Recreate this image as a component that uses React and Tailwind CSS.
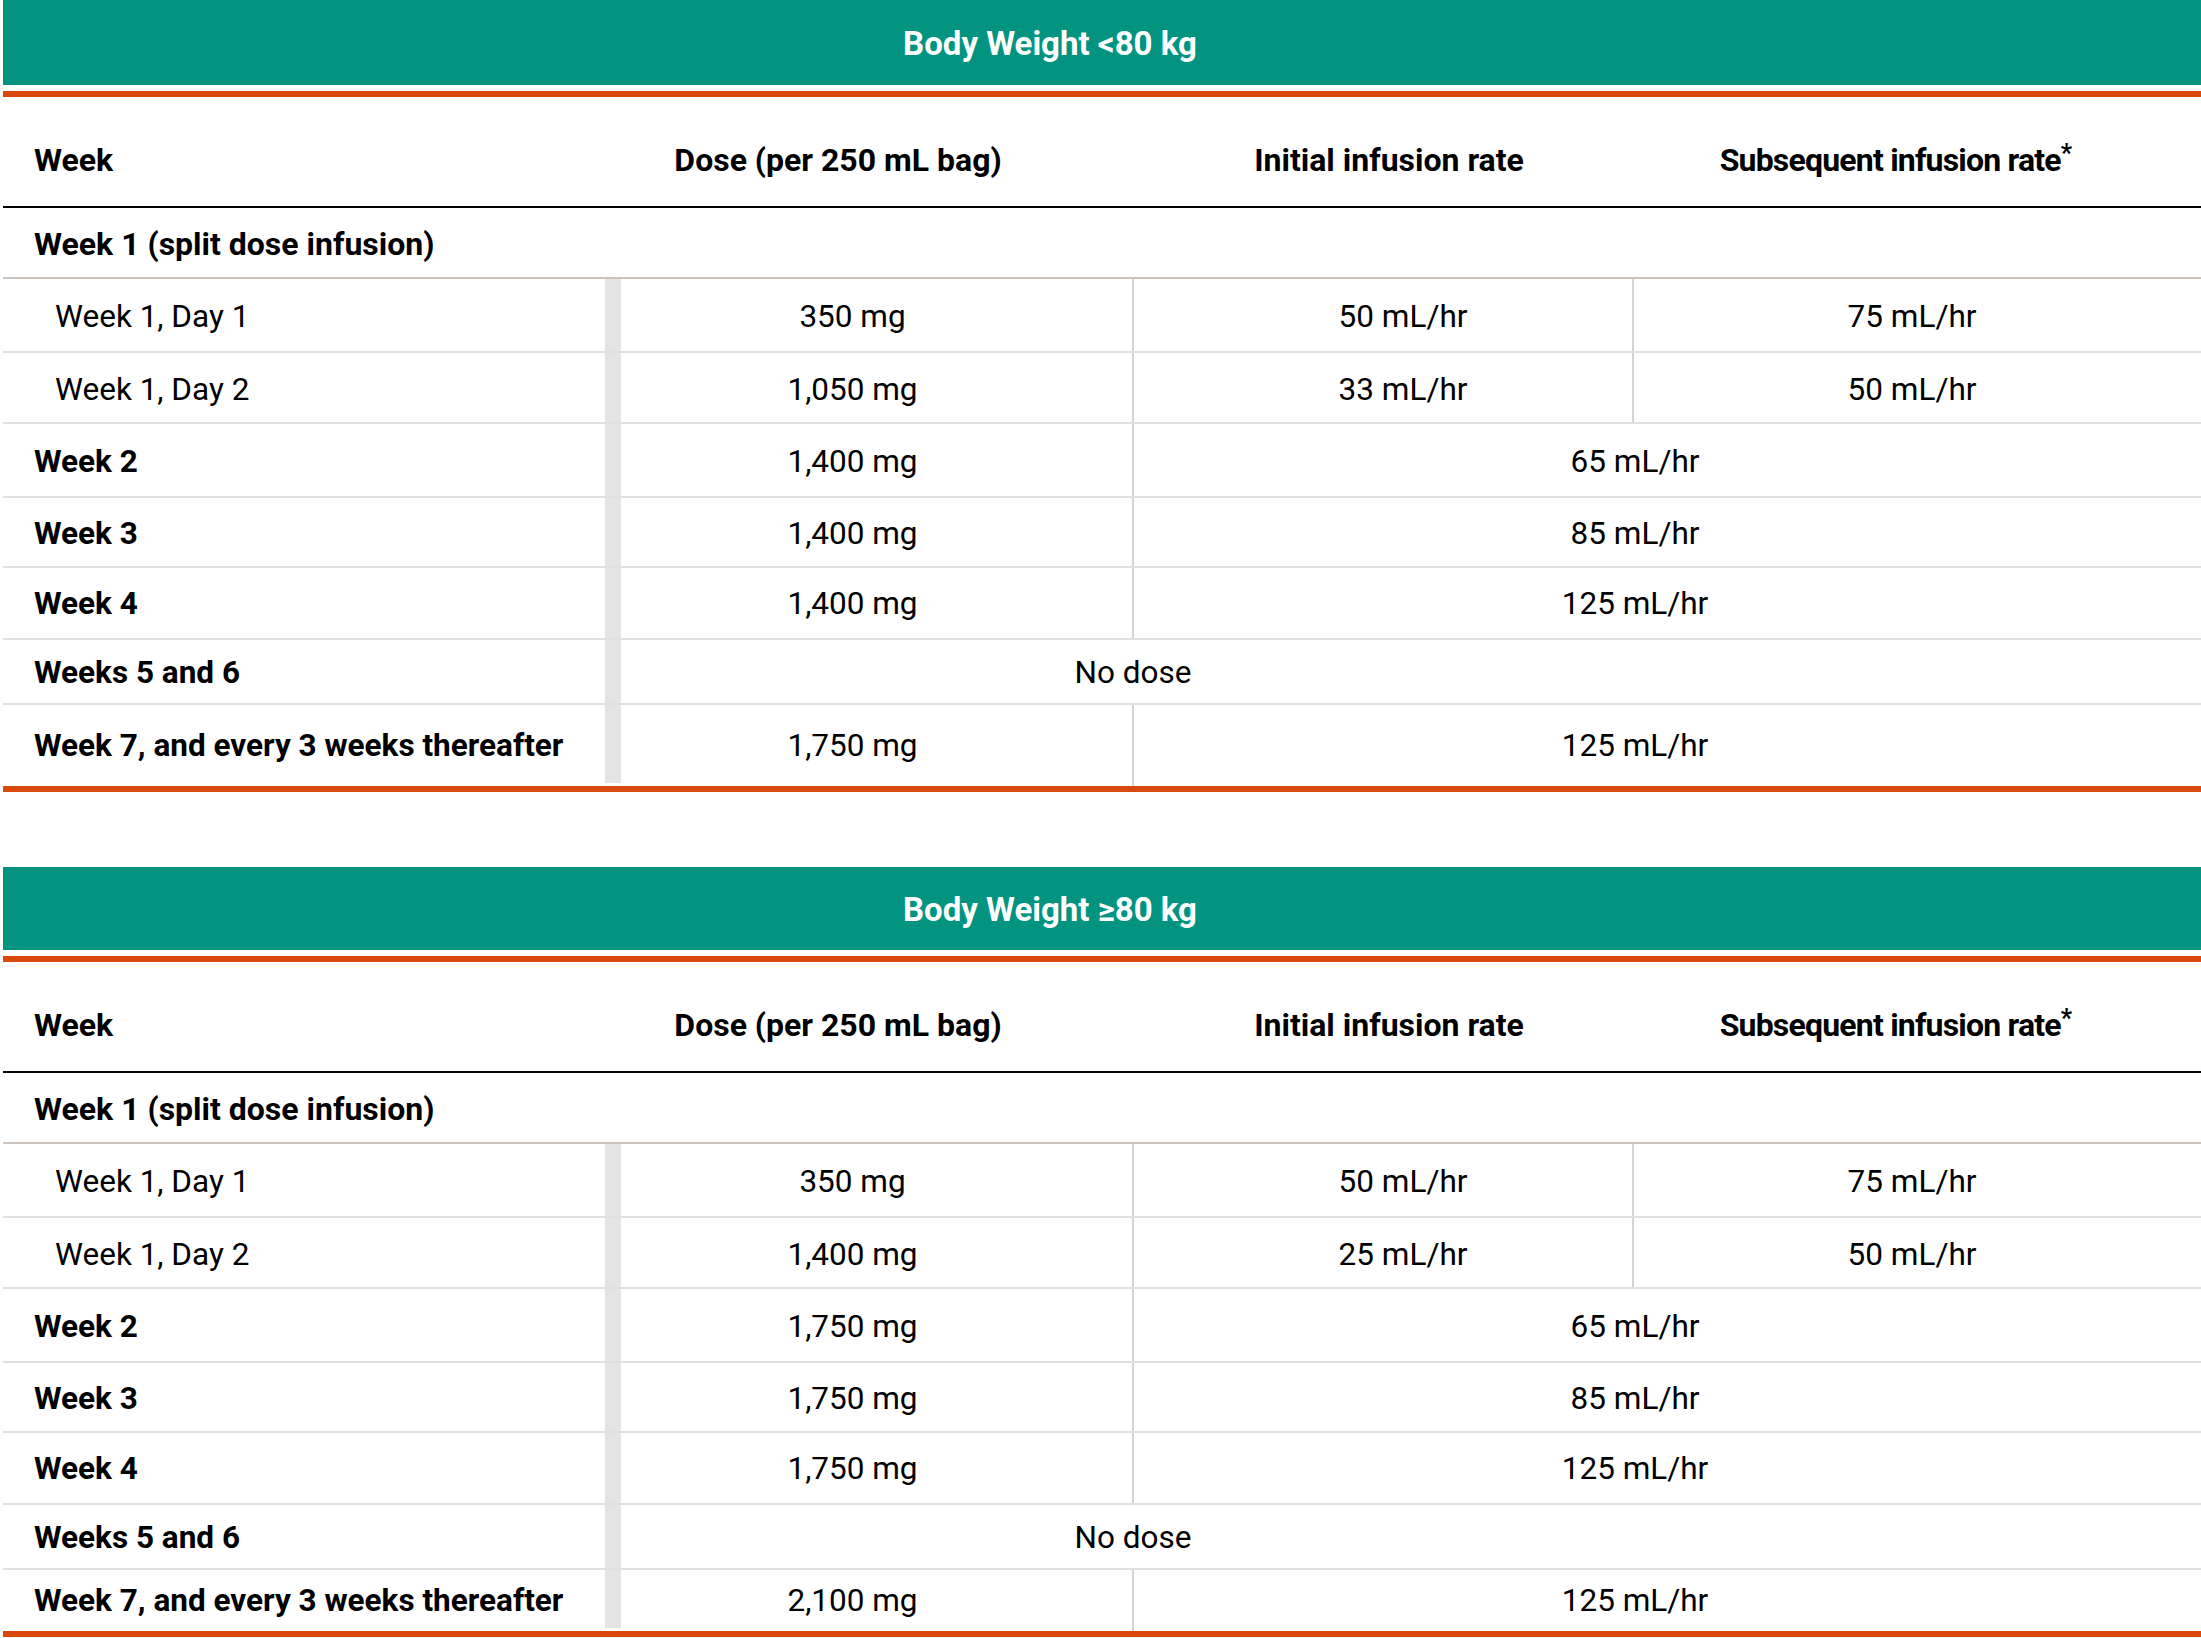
const tables = [
  {
    title: 'Body Weight <80 kg',
    teal: 'h-[85px]',
    day1: '350 mg',
    day2: '1,050 mg',
    day1Init: '50 mL/hr',
    day2Init: '33 mL/hr',
    weekly: ['1,400 mg', '1,400 mg', '1,400 mg'],
    last: '1,750 mg',
    lastRow: 'h-[81px]',
  },
  {
    title: 'Body Weight ≥80 kg',
    teal: 'h-[83px]',
    day1: '350 mg',
    day2: '1,400 mg',
    day1Init: '50 mL/hr',
    day2Init: '25 mL/hr',
    weekly: ['1,750 mg', '1,750 mg', '1,750 mg'],
    last: '2,100 mg',
    lastRow: 'h-[61px]',
  },
];

const row = 'grid grid-cols-[602px_16px_511px_500px_1fr] border-b-2 border-[#e0e0e0] items-stretch';
const bar = 'bg-[#e4e4e4]';
const vline = 'border-l-2 border-[#d4d4d4]';

function DoseTable({ t }) {
  const rates = ['65 mL/hr', '85 mL/hr', '125 mL/hr'];
  const heights = ['h-[74px]', 'h-[70px]', 'h-[72px]'];
  const pads = ['pt-[4px]', 'pt-[3px]', 'pt-[2px]'];
  return (
    <div className="w-full">
      {/* Title bar */}
      <div className={`${t.teal} bg-[#029481] flex items-center justify-center pr-[104px] pt-[2px] text-white font-bold text-[33px]`}>
        {t.title}
      </div>
      <div className="h-[6px]" />
      <div className="h-[6px] bg-[#d9490b]" />

      {/* Column headers */}
      <div className="grid grid-cols-[602px_16px_511px_500px_1fr] h-[111px] pt-[16px] border-b-2 border-black font-bold text-[32px] items-center">
        <div className="pl-[31px]">Week</div>
        <div className="col-span-2 flex justify-center pr-[61px]">Dose (per 250 mL bag)</div>
        <div className="flex justify-center pl-[14px]">Initial infusion rate</div>
        <div className="flex justify-center pr-[42px]">
          <span className="tracking-[-0.8px]">
            Subsequent infusion rate<span className="relative top-[-9px] text-[25px]">*</span>
          </span>
        </div>
      </div>

      {/* Group heading */}
      <div className="h-[71px] pt-[2px] border-b-2 border-[#cbc3be] flex items-center pl-[31px] font-bold text-[32px]">
        Week 1 (split dose infusion)
      </div>

      {/* Split dose rows */}
      <div className={`${row} h-[74px]`}>
        <div className="flex items-center pt-[4px] pl-[52px]">Week 1, Day 1</div>
        <div className={bar} />
        <div className="flex items-center justify-center pt-[4px] pr-[48px]">{t.day1}</div>
        <div className={`${vline} flex items-center justify-center pt-[4px] pl-[40px]`}>{t.day1Init}</div>
        <div className={`${vline} flex items-center justify-center pt-[4px] pr-[11px]`}>75 mL/hr</div>
      </div>
      <div className={`${row} h-[71px]`}>
        <div className="flex items-center pt-[4px] pl-[52px]">Week 1, Day 2</div>
        <div className={bar} />
        <div className="flex items-center justify-center pt-[4px] pr-[48px]">{t.day2}</div>
        <div className={`${vline} flex items-center justify-center pt-[4px] pl-[40px]`}>{t.day2Init}</div>
        <div className={`${vline} flex items-center justify-center pt-[4px] pr-[11px]`}>50 mL/hr</div>
      </div>

      {/* Weeks 2-4 */}
      {t.weekly.map((dose, i) => (
        <div key={i} className={`${row} ${heights[i]}`}>
          <div className={`flex items-center ${pads[i]} pl-[31px] font-bold`}>Week {i + 2}</div>
          <div className={bar} />
          <div className={`flex items-center justify-center ${pads[i]} pr-[48px]`}>{dose}</div>
          <div className={`${vline} col-span-2 flex items-center justify-center ${pads[i]} pr-[65px]`}>{rates[i]}</div>
        </div>
      ))}

      {/* No dose */}
      <div className={`${row} h-[65px]`}>
        <div className="flex items-center pt-[2px] pl-[31px] font-bold">Weeks 5 and 6</div>
        <div className={bar} />
        <div className="col-span-3 flex items-center justify-center pt-[2px] pr-[556px]">No dose</div>
      </div>

      {/* Maintenance */}
      <div className={`grid grid-cols-[602px_16px_511px_500px_1fr] ${t.lastRow} items-stretch`}>
        <div className="flex items-center pl-[31px] font-bold">Week 7, and every 3 weeks thereafter</div>
        <div className={`${bar} mb-[3px]`} />
        <div className="flex items-center justify-center pr-[48px]">{t.last}</div>
        <div className={`${vline} col-span-2 flex items-center justify-center pr-[65px]`}>125 mL/hr</div>
      </div>
      <div className="h-[6px] bg-[#d9490b]" />
    </div>
  );
}

export default function App() {
  return (
    <div className="w-[2201px] h-[1638px] overflow-hidden bg-white pl-[3px] text-[31.5px] text-black font-['Roboto',sans-serif] leading-none">
      <DoseTable t={tables[0]} />
      <div className="h-[75px]" />
      <DoseTable t={tables[1]} />
    </div>
  );
}
